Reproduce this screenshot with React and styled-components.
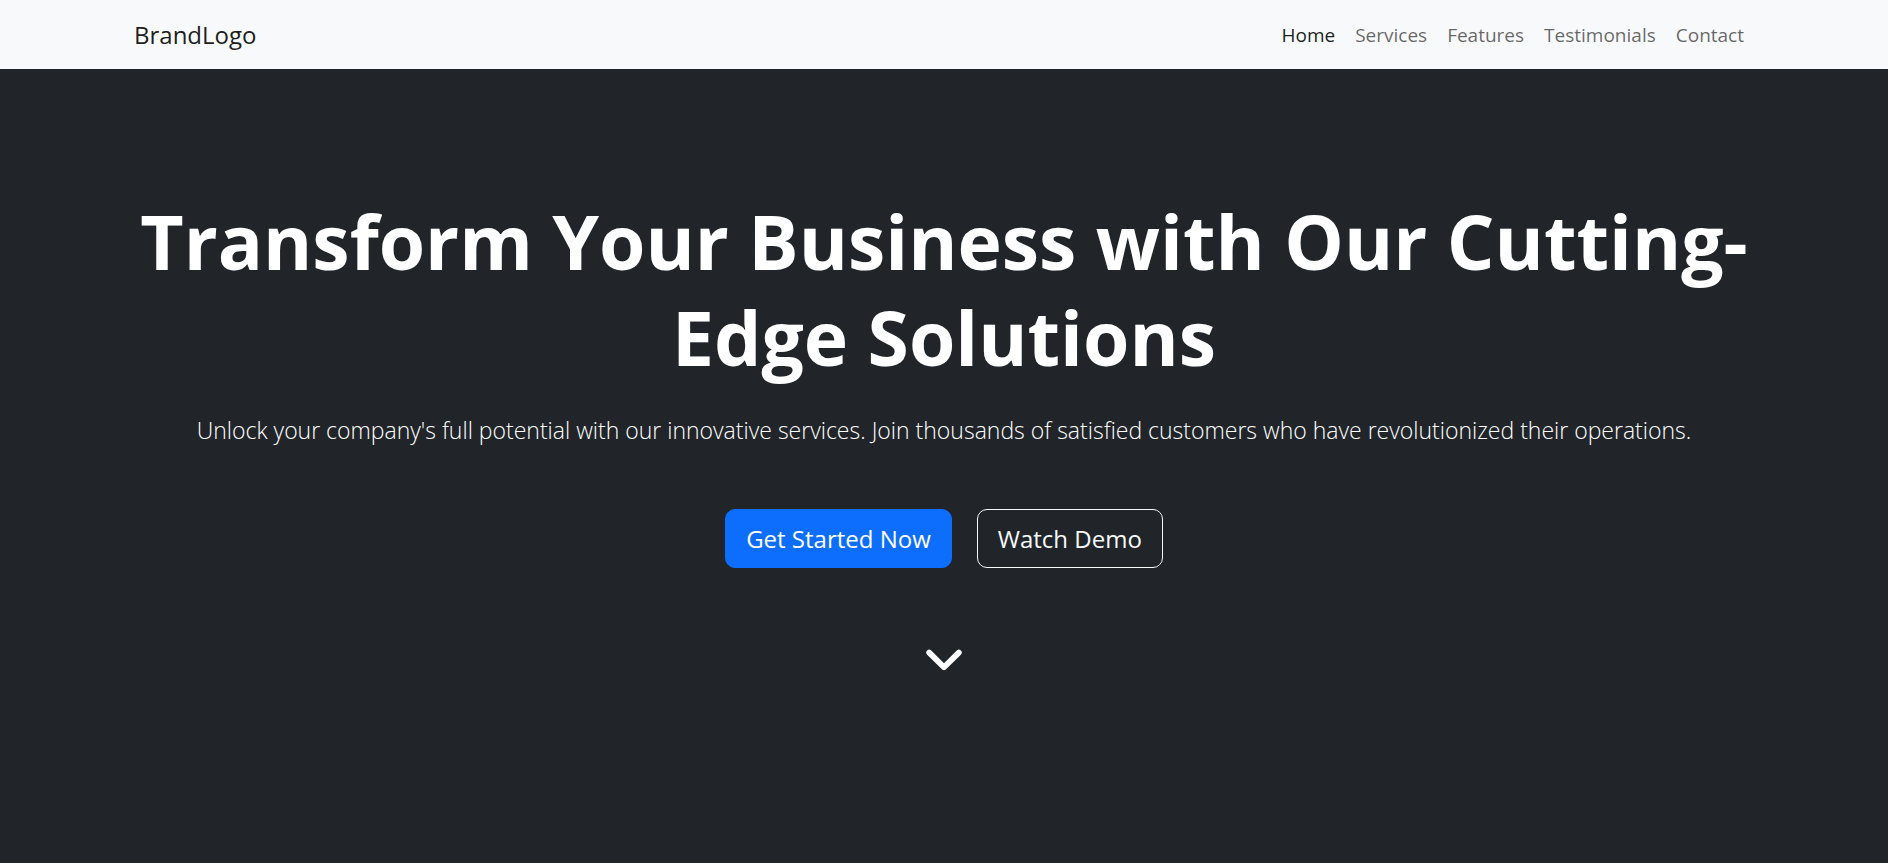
import React from "react";
import styled, { createGlobalStyle, css } from "styled-components";

const GlobalStyle = createGlobalStyle`
  *, *::before, *::after { box-sizing: border-box; }
  html, body, #root { height: 100%; }
  body {
    margin: 0;
    font-family: "Segoe UI", "Open Sans", "Noto Sans", sans-serif;
    font-size: 19px;
    line-height: 28px;
    color: #212529;
    background: #212529;
  }
`;

const Page = styled.div`
  display: flex;
  flex-direction: column;
  min-height: 100%;
`;

const Container = styled.div`
  width: 100%;
  max-width: 1650px;
  margin: 0 auto;
  padding: 0 15px;
`;

const Navbar = styled.header`
  padding: 16px 0;
  background: #f8f9fa;
`;

const NavbarRow = styled(Container)`
  display: flex;
  flex-wrap: wrap;
  align-items: center;
  justify-content: space-between;
`;

const Brand = styled.a`
  font-size: 24px;
  line-height: 37px;
  color: rgba(0, 0, 0, 0.9);
  text-decoration: none;
`;

const NavList = styled.ul`
  display: flex;
  flex-wrap: wrap;
  margin: 0;
  padding: 0;
  list-style: none;
`;

const NavLink = styled.a`
  display: block;
  padding: 0 10px;
  color: ${({ $active }) => ($active ? "rgba(0, 0, 0, 0.9)" : "rgba(0, 0, 0, 0.6)")};
  text-decoration: none;
`;

const Hero = styled.main`
  flex: 1;
  padding: 124px 0;
  background: #212529;
  color: #fff;
  text-align: center;
`;

const Title = styled.h1`
  margin: 0 0 26px;
  font-size: 75px;
  font-weight: 700;
  line-height: 96px;
`;

const Lead = styled.p`
  margin: 0 0 60px;
  font-size: 23px;
  font-weight: 300;
  line-height: 38px;
`;

const Actions = styled.div`
  display: flex;
  flex-wrap: wrap;
  justify-content: center;
  gap: 25px;
  margin-bottom: 72px;
`;

const Button = styled.button`
  padding: 10px 20px;
  border: 1px solid #f8f9fa;
  border-radius: 10px;
  font: inherit;
  font-size: 24px;
  line-height: 37px;
  color: #f8f9fa;
  background: transparent;
  cursor: pointer;
  ${({ $primary }) =>
    $primary &&
    css`
      border-color: #0d6efd;
      background: #0d6efd;
      color: #fff;
    `}
`;

const ScrollLink = styled.a`
  display: inline-flex;
  color: #fff;
`;

const ChevronDown = () => (
  <svg
    width="40"
    height="40"
    viewBox="0 0 40 40"
    fill="none"
    stroke="currentColor"
    strokeWidth="5.8"
    strokeLinecap="round"
    strokeLinejoin="round"
    aria-hidden="true"
  >
    <path d="M5.2 12.6 20 27.2 34.8 12.6" />
  </svg>
);

const links = ["Home", "Services", "Features", "Testimonials", "Contact"];

export default function App() {
  return (
    <Page>
      <GlobalStyle />
      <Navbar>
        <NavbarRow>
          <Brand href="#">BrandLogo</Brand>
          <nav aria-label="Main">
            <NavList>
              {links.map((label, i) => (
                <li key={label}>
                  <NavLink href={`#${label.toLowerCase()}`} $active={i === 0}>
                    {label}
                  </NavLink>
                </li>
              ))}
            </NavList>
          </nav>
        </NavbarRow>
      </Navbar>
      <Hero>
        <Container>
          <Title>Transform Your Business with Our Cutting-Edge Solutions</Title>
          <Lead>
            Unlock your company's full potential with our innovative services. Join thousands of
            satisfied customers who have revolutionized their operations.
          </Lead>
          <Actions>
            <Button type="button" $primary>
              Get Started Now
            </Button>
            <Button type="button">Watch Demo</Button>
          </Actions>
          <ScrollLink href="#services" aria-label="Scroll down">
            <ChevronDown />
          </ScrollLink>
        </Container>
      </Hero>
    </Page>
  );
}
